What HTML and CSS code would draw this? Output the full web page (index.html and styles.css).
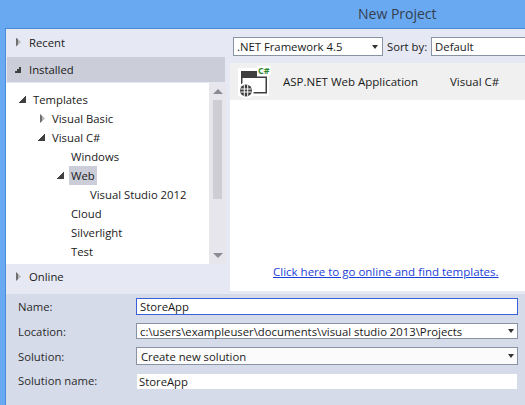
FILE: index.html
```html
<!DOCTYPE html>
<html lang="en">
  <head>
    <meta charset="UTF-8" />
    <title>New Project</title>
    <link rel="stylesheet" href="styles.css">
  </head>

  <body>
    <div class="title-bar"><span class="title">New Project</span></div>
    <div class="dialog">
      <div class="top">
        <div class="sidebar">
          <div class="section recent"><span class="arrow closed"></span>Recent</div>
          <div class="section active"><span class="arrow open"></span>Installed</div>
          <div class="tree-wrap">
            <ul class="tree">
              <li class="lvl0"><span class="arrow open"></span><span class="node">Templates</span></li>
              <li class="lvl1"><span class="arrow closed"></span><span class="node">Visual Basic</span></li>
              <li class="lvl1"><span class="arrow open"></span><span class="node">Visual C#</span></li>
              <li class="lvl2"><span class="arrow none"></span><span class="node">Windows</span></li>
              <li class="lvl2"><span class="arrow open"></span><span class="node selected">Web</span></li>
              <li class="lvl3"><span class="arrow none"></span><span class="node">Visual Studio 2012</span></li>
              <li class="lvl2"><span class="arrow none"></span><span class="node">Cloud</span></li>
              <li class="lvl2"><span class="arrow none"></span><span class="node">Silverlight</span></li>
              <li class="lvl2"><span class="arrow none"></span><span class="node">Test</span></li>
            </ul>
            <div class="scrollbar">
              <span class="scroll-up"></span>
              <span class="thumb"></span>
              <span class="scroll-down"></span>
            </div>
          </div>
          <div class="section online"><span class="arrow closed"></span>Online</div>
        </div>

        <div class="main">
          <div class="toolbar">
            <div class="select framework"><span>.NET Framework 4.5</span><span class="caret"></span></div>
            <span class="sort-label">Sort by:</span>
            <div class="select sort"><span>Default</span></div>
          </div>
          <div class="list">
            <div class="item">
              <svg class="item-icon" width="32" height="32" viewBox="0 0 32 32">
                <rect x="0" y="1" width="31" height="28" fill="#fff" />
                <path d="M3 4h16v5.5h10v17H14V25h13.5V11H4.5v9H3z" fill="#3f3f3f" />
                <circle cx="8" cy="23.5" r="8" fill="#fff" />
                <circle cx="8" cy="23.5" r="6" fill="#3f3f3f" />
                <path d="M2.5 22h11M2.5 25h11M6.3 18v11M9.7 18v11" stroke="#fff" stroke-width="1" />
              </svg>
              <span class="cs-badge">C#</span>
              <span class="item-name">ASP.NET Web Application</span>
              <span class="item-lang">Visual C#</span>
            </div>
            <a class="online-link" href="#">Click here to go online and find templates.</a>
          </div>
        </div>
      </div>

      <form class="form">
        <label class="form-label">Name:</label>
        <div class="field focus">StoreApp</div>
        <label class="form-label">Location:</label>
        <div class="field combo"><span>c:\users\exampleuser\documents\visual studio 2013\Projects</span><span class="caret"></span></div>
        <label class="form-label">Solution:</label>
        <div class="field combo solution"><span>Create new solution</span><span class="caret"></span></div>
        <label class="form-label">Solution name:</label>
        <div class="field plain">StoreApp</div>
      </form>
    </div>
  </body>
</html>
```

FILE: styles.css
```css
* {
  box-sizing: border-box;
}

html,
body {
  margin: 0;
  height: 100%;
  overflow: hidden;
}

body {
  background: #69a9f2;
  font-family: "Open Sans", "Noto Sans", sans-serif;
  font-size: 11.3px;
  color: #1a1a1a;
  display: flex;
  flex-direction: column;
}

.title-bar {
  height: 28px;
  padding-left: 358px;
  flex: none;
}

.title {
  font-size: 14px;
  line-height: 28px;
  color: #34404e;
}

.dialog {
  flex: 1;
  margin-left: 5px;
  border-top: 1px solid #4c8bd8;
  border-left: 1px solid #4c8bd8;
  display: flex;
  flex-direction: column;
  background: #e6e9f4;
}

.top {
  height: 265px;
  display: flex;
  flex: none;
}

.sidebar {
  width: 220px;
  display: flex;
  flex-direction: column;
}

.section {
  height: 28px;
  padding-left: 10px;
  display: flex;
  align-items: center;
}

.section .arrow {
  margin-right: 8px;
}

.section.recent {
  padding-bottom: 2px;
}

.section.active {
  height: 25px;
  background: #cbcdd9;
  padding-left: 7px;
  margin-left: 1px;
  margin-right: 1px;
}

.section.online {
  height: 30px;
  padding-bottom: 5px;
}

.tree-wrap {
  height: 181px;
  margin-top: 1px;
  display: flex;
  background: #fff;
}

.tree {
  flex: 1;
  margin: 0;
  padding: 7px 0 0;
  list-style: none;
}

.tree li {
  height: 19px;
  display: flex;
  align-items: center;
}

.lvl0 {
  padding-left: 13px;
}

.lvl1 {
  padding-left: 32px;
}

.lvl2 {
  padding-left: 51px;
}

.lvl3 {
  padding-left: 70px;
}

.tree .arrow {
  margin-right: 5px;
}

.node {
  padding: 0 2px;
  line-height: 19px;
}

.node.selected {
  background: #cbcdd9;
}

.arrow {
  display: inline-block;
  width: 7px;
  height: 8px;
  flex: none;
}

.arrow.open {
  background: linear-gradient(135deg, transparent 50%, #404040 50%);
  height: 7px;
}

.arrow.closed {
  width: 5px;
  height: 9px;
  clip-path: polygon(0 0, 100% 50%, 0 100%);
  background: linear-gradient(90deg, #6f6f6f 40%, #b4b4b4 40%);
}

.tree .arrow.closed {
  margin-left: 2px;
}

.scrollbar {
  width: 17px;
  background: #e6e6ec;
  display: flex;
  flex-direction: column;
  align-items: center;
}

.scroll-up,
.scroll-down {
  width: 0;
  height: 0;
  border-left: 5px solid transparent;
  border-right: 5px solid transparent;
}

.scroll-up {
  margin-top: 6px;
  border-bottom: 5px solid #8b8b93;
}

.thumb {
  width: 9px;
  height: 99px;
  margin-top: 6px;
  background: #cdcdd3;
}

.scroll-down {
  margin-top: 54px;
  border-top: 5px solid #8b8b93;
}

.main {
  flex: 1;
  margin-left: 4px;
  display: flex;
  flex-direction: column;
}

.toolbar {
  height: 34px;
  padding: 8px 0 0 3px;
  display: flex;
  align-items: flex-start;
  flex: none;
}

.select {
  height: 19px;
  background: #fff;
  border: 1px solid #8a93a3;
  padding-left: 3px;
  display: flex;
  align-items: center;
  justify-content: space-between;
}

.framework {
  width: 150px;
  padding-right: 4px;
}

.sort-label {
  margin-left: 4px;
  line-height: 19px;
}

.sort {
  flex: 1;
  margin-left: 4px;
  margin-right: -2px;
}

.caret {
  width: 0;
  height: 0;
  border-left: 3.5px solid transparent;
  border-right: 3.5px solid transparent;
  border-top: 4px solid #333;
  flex: none;
}

.list {
  height: 228px;
  background: #fff;
  display: flex;
  flex-direction: column;
}

.item {
  height: 37px;
  background: #f0f0f0;
  display: flex;
  align-items: center;
  position: relative;
  padding-left: 8px;
  font-size: 11.5px;
  flex: none;
}

.item-icon {
  margin-top: 2px;
  flex: none;
}

.cs-badge {
  position: absolute;
  left: 27px;
  top: 3px;
  padding: 0 1px;
  background: #fff;
  color: #2f8a2f;
  font-size: 9px;
  font-weight: 700;
  line-height: 9px;
}

.item-name {
  margin-left: 13px;
  width: 167px;
}

.item-lang {
  flex: none;
}

.online-link {
  margin: 164px 0 0 43px;
  color: #1b3ed8;
  font-size: 11.5px;
  white-space: nowrap;
}

.form {
  flex: 1;
  background: #d6dbe9;
  padding: 4px 7px 0 12px;
  display: grid;
  grid-template-columns: 118px 1fr;
  grid-template-rows: 17px 16px 18px 15px;
  row-gap: 8px;
  align-content: start;
  align-items: center;
}

.form-label {
  color: #2a2a2a;
}

.field {
  height: 100%;
  background: #fff;
  padding-left: 3px;
  border: 1px solid #8a93a3;
  display: flex;
  align-items: center;
  justify-content: space-between;
  white-space: nowrap;
}

.field.focus {
  border-color: #3a62d8;
}

.field.combo {
  padding-right: 3px;
}

.field.solution {
  background: #fbfbfb;
  padding-left: 4px;
}

.field.plain {
  border: none;
  margin: 1px 1px 0;
  padding-left: 2px;
}
```
